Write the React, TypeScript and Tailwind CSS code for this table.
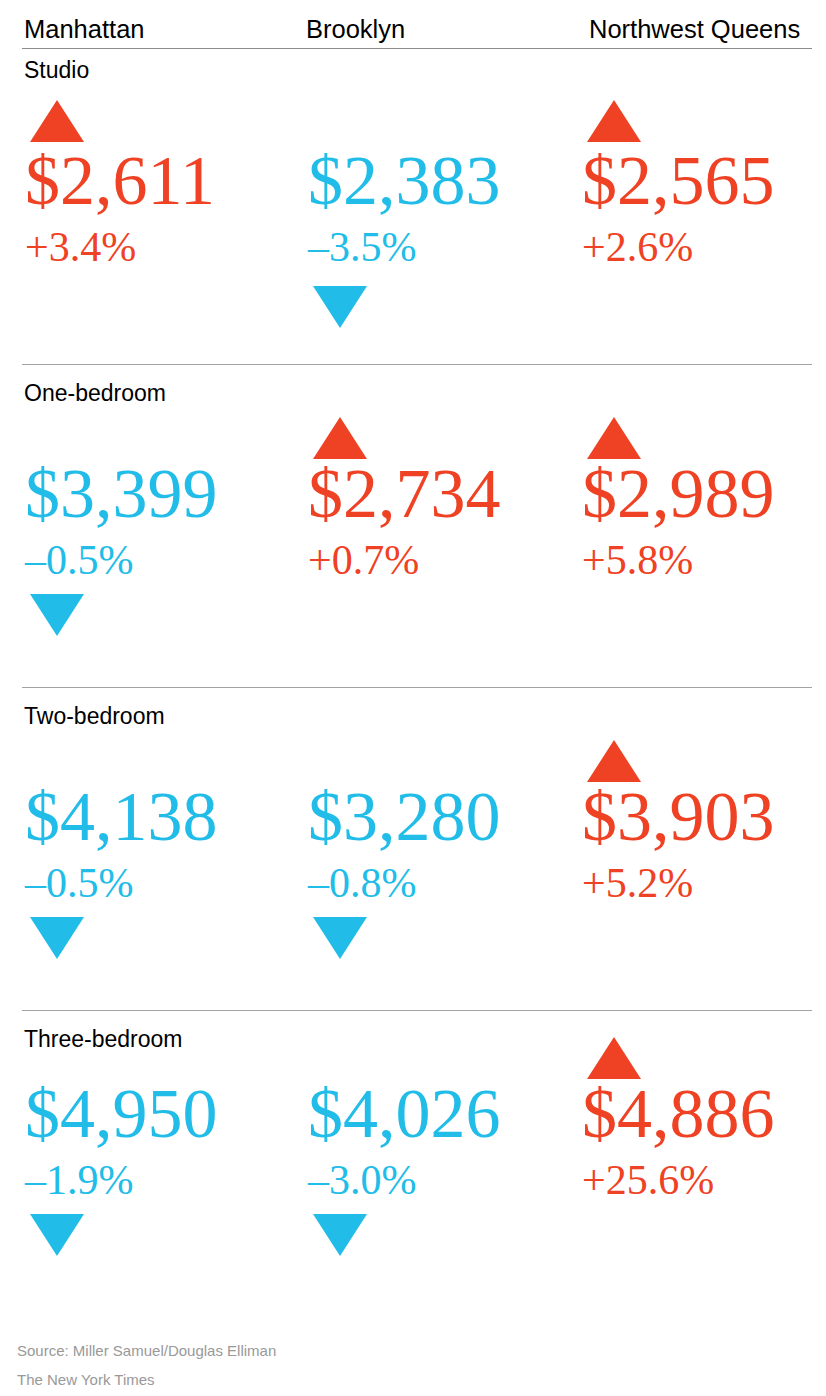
import React from "react"

type CellData = { price: string; pct: string; up: boolean }

type RowData = {
  label: string
  cells: CellData[]
  height: string
  labelPad: string
  gridGap: string
  priceGap: string
  arrowGap: string
  last?: boolean
}

const rows: RowData[] = [
  {
    label: "Studio",
    cells: [
      { price: "$2,611", pct: "+3.4%", up: true },
      { price: "$2,383", pct: "–3.5%", up: false },
      { price: "$2,565", pct: "+2.6%", up: true },
    ],
    height: "h-[316px]",
    labelPad: "pt-[10px]",
    gridGap: "mt-[18px]",
    priceGap: "mt-[4px]",
    arrowGap: "mt-[18px]",
  },
  {
    label: "One-bedroom",
    cells: [
      { price: "$3,399", pct: "–0.5%", up: false },
      { price: "$2,734", pct: "+0.7%", up: true },
      { price: "$2,989", pct: "+5.8%", up: true },
    ],
    height: "h-[323px]",
    labelPad: "pt-[17px]",
    gridGap: "mt-[12px]",
    priceGap: "mt-0",
    arrowGap: "mt-[13px]",
  },
  {
    label: "Two-bedroom",
    cells: [
      { price: "$4,138", pct: "–0.5%", up: false },
      { price: "$3,280", pct: "–0.8%", up: false },
      { price: "$3,903", pct: "+5.2%", up: true },
    ],
    height: "h-[323px]",
    labelPad: "pt-[17px]",
    gridGap: "mt-[12px]",
    priceGap: "mt-0",
    arrowGap: "mt-[13px]",
  },
  {
    label: "Three-bedroom",
    cells: [
      { price: "$4,950", pct: "–1.9%", up: false },
      { price: "$4,026", pct: "–3.0%", up: false },
      { price: "$4,886", pct: "+25.6%", up: true },
    ],
    height: "h-[330px]",
    labelPad: "pt-[17px]",
    gridGap: "-mt-[14px]",
    priceGap: "mt-0",
    arrowGap: "mt-[13px]",
    last: true,
  },
]

// solid triangle marker, pointing up for a rise and down for a fall
function Arrow({ up }: { up: boolean }) {
  return (
    <svg width="54" height="42" viewBox="0 0 54 42" className="block">
      {up ? (
        <polygon points="0,42 27,0 54,42" fill="#ef4123" />
      ) : (
        <polygon points="0,0 54,0 27,42" fill="#21bde8" />
      )}
    </svg>
  )
}

function Cell({ cell, priceGap, arrowGap }: { cell: CellData; priceGap: string; arrowGap: string }) {
  const color = cell.up ? "text-[#ef4123]" : "text-[#21bde8]"
  return (
    <div className={`flex flex-col font-['Liberation_Serif',serif] ${color}`}>
      <div className="h-[42px] pl-[6px]">{cell.up && <Arrow up />}</div>
      <div className={`${priceGap} pl-[1px] text-[70px] leading-[70px] whitespace-nowrap`}>{cell.price}</div>
      <div className="mt-[10px] pl-[1px] text-[42px] leading-[42px] whitespace-nowrap">{cell.pct}</div>
      {!cell.up && (
        <div className={`${arrowGap} pl-[6px]`}>
          <Arrow up={false} />
        </div>
      )}
    </div>
  )
}

export default function App() {
  return (
    <div className="w-[826px] min-h-[1396px] bg-white font-['Liberation_Sans',Arial,sans-serif] text-black">
      <div className="ml-[22px] w-[790px]">
        {/* Column headings */}
        <div className="grid grid-cols-[282px_283px_1fr] border-b border-[#8c8c8c] pl-[2px] pt-[16px] pb-[6px] text-[25.5px] leading-[26px]">
          <div>Manhattan</div>
          <div>Brooklyn</div>
          <div>Northwest Queens</div>
        </div>

        {rows.map((row) => (
          <div
            key={row.label}
            className={`${row.height} ${row.last ? "" : "border-b border-[#a3a3a3]"} ${row.labelPad}`}
          >
            <div className="pl-[2px] text-[23px] leading-[23px]">{row.label}</div>
            <div className={`${row.gridGap} grid grid-cols-[283px_274px_1fr] pl-[2px]`}>
              {row.cells.map((cell, i) => (
                <Cell key={i} cell={cell} priceGap={row.priceGap} arrowGap={row.arrowGap} />
              ))}
            </div>
          </div>
        ))}
      </div>

      {/* Credits */}
      <div className="pl-[17px] text-[15px] leading-[20px] text-[#999]">
        <p>Source: Miller Samuel/Douglas Elliman</p>
        <p className="mt-[9px]">The New York Times</p>
      </div>
    </div>
  )
}
